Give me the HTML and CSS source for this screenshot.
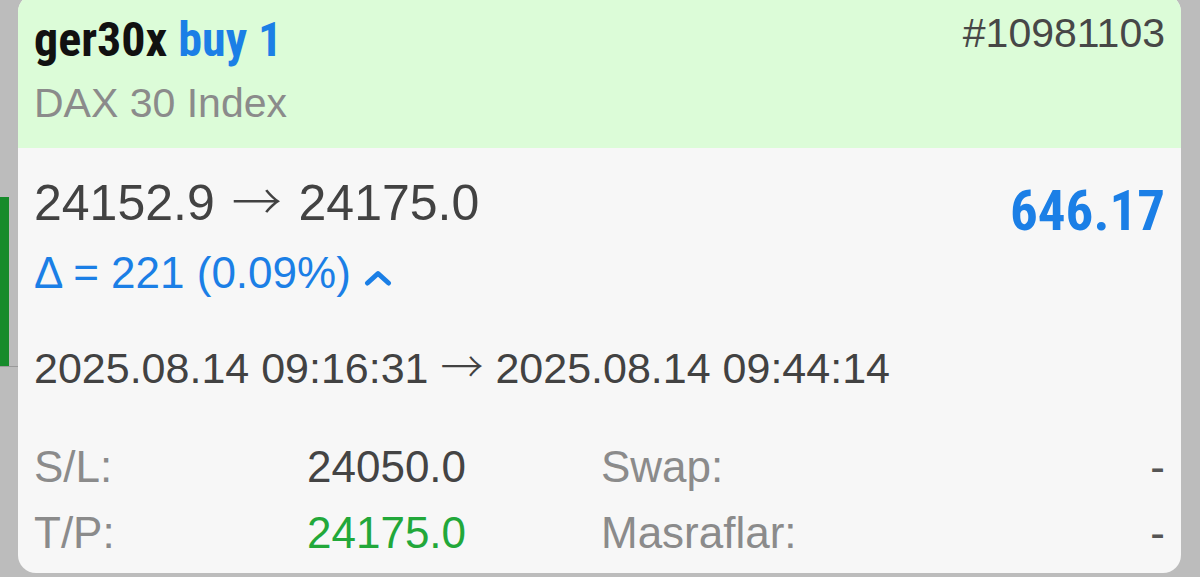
FILE: index.html
```html
<!DOCTYPE html>
<html lang="tr">
<head>
<meta charset="utf-8">
<title>ger30x buy 1</title>
<link rel="stylesheet" href="styles.css">
</head>
<body>
<div class="page">
  <div class="rail">
    <div class="rail-bar"></div>
    <div class="rail-line"></div>
  </div>
  <div class="card">
    <div class="card-head">
      <div class="head-left">
        <div class="title"><span class="sym">ger30x</span> <span class="side">buy 1</span></div>
        <div class="subtitle">DAX 30 Index</div>
      </div>
      <div class="ticket">#10981103</div>
    </div>
    <div class="card-body">
      <div class="price-row">
        <div class="price-left">
          <div class="prices">24152.9 <span class="arrow">→</span> 24175.0</div>
          <div class="delta">Δ = 221 (0.09%)<svg class="chev" width="28" height="16" viewBox="0 0 28 16"><path d="M3.5 13 L14 3.5 L24.5 13" fill="none" stroke="#1b7fe6" stroke-width="5" stroke-linecap="round" stroke-linejoin="round"/></svg></div>
        </div>
        <div class="profit">646.17</div>
      </div>
      <div class="times">2025.08.14 09:16:31 <span class="arrow">→</span> 2025.08.14 09:44:14</div>
      <div class="details">
        <div class="lbl">S/L:</div>
        <div class="val">24050.0</div>
        <div class="lbl">Swap:</div>
        <div class="val end">-</div>
        <div class="lbl">T/P:</div>
        <div class="val green">24175.0</div>
        <div class="lbl">Masraflar:</div>
        <div class="val end">-</div>
      </div>
    </div>
  </div>
</div>
</body>
</html>
```

FILE: styles.css
```css
html, body {
  margin: 0;
  padding: 0;
  background: #bcbcbc;
  overflow: hidden;
}
body {
  font-family: "Liberation Sans", Arial, sans-serif;
  color: #444;
}
.page {
  display: flex;
  align-items: flex-start;
  width: 1200px;
  height: 577px;
}
.rail {
  flex: none;
  width: 18px;
  display: flex;
  flex-direction: column;
  padding-top: 197px;
}
.rail-bar {
  width: 9px;
  height: 169px;
  background: #168b2b;
}
.rail-line {
  width: 18px;
  height: 1px;
  background: #9a9a9a;
}
.card {
  position: relative;
  flex: none;
  width: 1163px;
  margin-top: -6px;
  border-radius: 18px;
  background: #f7f7f7;
}
.card::before {
  content: "";
  position: absolute;
  left: 2px;
  right: 2px;
  bottom: 0;
  height: 40px;
  border-radius: 0 0 9px 9px;
  background: #121212;
  z-index: -1;
}
.card-head {
  display: flex;
  justify-content: space-between;
  align-items: flex-start;
  padding: 18px 16px 19px 16px;
  background: #dcfcd8;
  border-radius: 18px 18px 0 0;
}
.title {
  font-family: "Liberation Sans Narrow", "Roboto Condensed", "DejaVu Sans Condensed", sans-serif;
  font-weight: 700;
  font-size: 48px;
  line-height: 56px;
  color: #111;
}
.side {
  color: #1b7fe6;
}
.subtitle {
  margin-top: 9px;
  font-size: 41px;
  line-height: 52px;
  color: #8b8b8b;
}
.ticket {
  margin-top: 0;
  font-size: 41px;
  line-height: 42px;
  color: #474747;
}
.card-body {
  padding: 27px 16px 15px 16px;
}
.price-row {
  display: flex;
  justify-content: space-between;
  align-items: flex-start;
}
.prices {
  font-size: 50px;
  line-height: 56px;
  word-spacing: 3px;
  color: #424242;
}
.arrow {
  font-family: "Noto Sans CJK SC", "Noto Sans CJK JP", sans-serif;
  font-weight: 300;
  line-height: 0;
}
.delta {
  margin-top: 17px;
  font-size: 44px;
  line-height: 50px;
  color: #1b7fe6;
}
.chev {
  margin-left: 13px;
  vertical-align: 2px;
}
.profit {
  margin-top: 6px;
  font-family: "Liberation Sans Narrow", "Roboto Condensed", "DejaVu Sans Condensed", sans-serif;
  font-weight: 700;
  font-size: 55px;
  line-height: 60px;
  color: #1b7fe6;
}
.times {
  margin-top: 45px;
  font-size: 43px;
  line-height: 50px;
  color: #424242;
}
.details {
  margin-top: 49px;
  display: grid;
  grid-template-columns: 273px 294px 1fr auto;
  row-gap: 16px;
  font-size: 44px;
  line-height: 50px;
}
.lbl {
  color: #8b8b8b;
}
.val {
  color: #444;
}
.val.green {
  color: #22a83a;
}
.val.end {
  text-align: right;
  color: #555;
}
```
